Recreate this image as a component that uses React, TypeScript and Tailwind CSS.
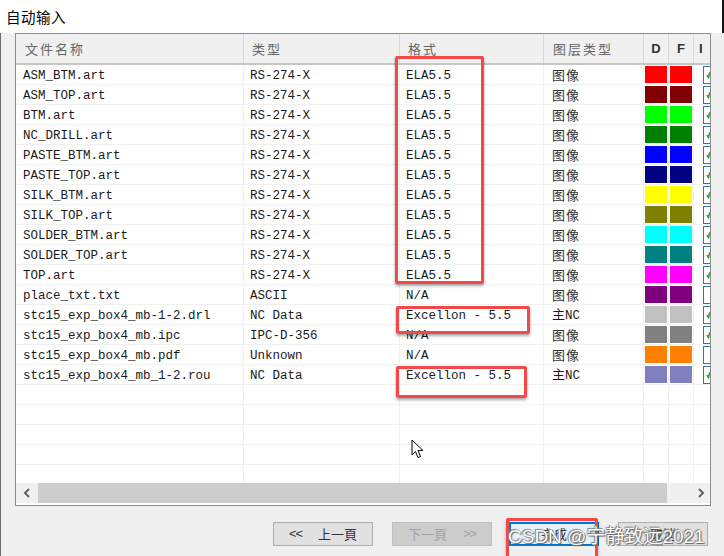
import React from "react";

type Row = [string, string, string, string, string, boolean]

const rows: Row[] = [
    ['ASM_BTM.art', 'RS-274-X', 'ELA5.5', '图像', '#ff0000', true],
    ['ASM_TOP.art', 'RS-274-X', 'ELA5.5', '图像', '#800000', true],
    ['BTM.art', 'RS-274-X', 'ELA5.5', '图像', '#00ff00', true],
    ['NC_DRILL.art', 'RS-274-X', 'ELA5.5', '图像', '#008000', true],
    ['PASTE_BTM.art', 'RS-274-X', 'ELA5.5', '图像', '#0000ff', true],
    ['PASTE_TOP.art', 'RS-274-X', 'ELA5.5', '图像', '#000080', true],
    ['SILK_BTM.art', 'RS-274-X', 'ELA5.5', '图像', '#ffff00', true],
    ['SILK_TOP.art', 'RS-274-X', 'ELA5.5', '图像', '#808000', true],
    ['SOLDER_BTM.art', 'RS-274-X', 'ELA5.5', '图像', '#00ffff', true],
    ['SOLDER_TOP.art', 'RS-274-X', 'ELA5.5', '图像', '#008080', true],
    ['TOP.art', 'RS-274-X', 'ELA5.5', '图像', '#ff00ff', true],
    ['place_txt.txt', 'ASCII', 'N/A', '图像', '#800080', false],
    ['stc15_exp_box4_mb-1-2.drl', 'NC Data', 'Excellon - 5.5', '主NC', '#c0c0c0', true],
    ['stc15_exp_box4_mb.ipc', 'IPC-D-356', 'N/A', '图像', '#808080', true],
    ['stc15_exp_box4_mb.pdf', 'Unknown', 'N/A', '图像', '#ff8000', false],
    ['stc15_exp_box4_mb_1-2.rou', 'NC Data', 'Excellon - 5.5', '主NC', '#8080c0', true],
]

const grid = "grid grid-cols-[228px_156px_144px_100px_25px_25px_40px]"
const mono = "font-['Liberation_Mono','Noto_Sans_CJK_SC',monospace] text-[12.5px] text-[#1a1a1a] pt-[4px]"
const cjk = "font-['Noto_Sans_CJK_SC',sans-serif]"

const Check = ({on}: { on: boolean }) => (
    <div className="ml-[9px] mt-[1px] h-[18px] w-[14px] border border-[#3d6fa6] bg-white">
        {on && (
            <svg width="6" height="8" viewBox="0 0 6 8" className="ml-[2px] mt-[4px]">
                <path d="M1 4 L2.5 6.5 L4 1" stroke="#3a9a3a" strokeWidth="1.6" fill="none"/>
            </svg>
        )}
    </div>
)

const Header = () => {
    const th = "flex items-center border-r border-[#d9d9d9] h-full"
    return (
        <div className={`${grid} h-[31px] bg-[#f0f0f0] border-b-2 border-[#c6c6c6] ${cjk} text-[13px] text-[#666] tracking-[2px]`}>
            <div className={`${th} pl-[9px]`}>文件名称</div>
            <div className={`${th} pl-[8px]`}>类型</div>
            <div className={`${th} pl-[8px]`}>格式</div>
            <div className={`${th} pl-[9px]`}>图层类型</div>
            <div className={`${th} justify-center font-['Liberation_Sans',sans-serif] font-bold text-[#333] tracking-normal`}>D</div>
            <div className={`${th} justify-center font-['Liberation_Sans',sans-serif] font-bold text-[#333] tracking-normal`}>F</div>
            <div className={`${th} pl-[5px] font-['Liberation_Sans',sans-serif] font-bold text-[#333] tracking-normal border-r-0`}>I</div>
        </div>
    )
}

const td = "h-[20px] border-r border-b border-[#f0f0f0] flex items-center whitespace-nowrap overflow-hidden"

const DataRow = ({r}: { r: Row }) => (
    <div className={grid}>
        <div className={`${td} pl-[7px] ${mono}`}>{r[0]}</div>
        <div className={`${td} pl-[6px] ${mono}`}>{r[1]}</div>
        <div className={`${td} pl-[6px] ${mono}`}>{r[2]}</div>
        <div className={`${td} pl-[8px] font-['Liberation_Mono',monospace] text-[12.5px] text-[#1a1a1a]`}>
            {r[3] === '主NC'
                ? <span><span className={`${cjk} text-[13px]`}>主</span>NC</span>
                : <span className={`${cjk} text-[13px] tracking-[1px] text-[#333]`}>{r[3]}</span>}
        </div>
        <div className={`${td} p-[1px]`}>
            <div className="w-full h-full" style={{background: r[4]}}/>
        </div>
        <div className={`${td} p-[1px]`}>
            <div className="w-full h-full" style={{background: r[4]}}/>
        </div>
        <div className={`${td} border-r-0`}><Check on={r[5]}/></div>
    </div>
)

const EmptyRow = () => (
    <div className={grid}>
        {[0, 1, 2, 3, 4, 5, 6].map(i => <div key={i} className={`${td} ${i == 6 ? 'border-r-0' : ''}`}/>)}
    </div>
)

const Chevron = ({dir}: { dir: 'l' | 'r' }) => (
    <svg width="8" height="10" viewBox="0 0 8 10">
        <path d={dir == 'l' ? "M6 1 L2 5 L6 9" : "M2 1 L6 5 L2 9"} stroke="#606060" strokeWidth="2" fill="none"/>
    </svg>
)

const Btn = ({children, className}: { children: React.ReactNode, className: string }) => (
    <div className={`h-[24px] flex items-center justify-center ${cjk} text-[13px] ${className}`}>{children}</div>
)

const RedBox = ({className}: { className: string }) => (
    <div className={`absolute border-[3px] border-[#f24848] rounded-[2px] shadow-[0_2px_3px_rgba(0,0,0,0.35)] ${className}`}/>
)

export default function App() {
    return (
        <div className="relative w-[724px] h-[556px] overflow-hidden bg-[#f0f0f0]">
            <div className="h-[33px] bg-white border-r-2 border-[#111] flex items-center pl-[6px]">
                <span className={`${cjk} text-[14.5px] text-black tracking-[0.5px]`}>自动输入</span>
            </div>
            <div className="border-l border-[#6a6a6a] h-[523px] flex flex-col">
                <div className="ml-[14px] w-[696px] h-[473px] border border-[#8c8c8c] bg-white flex flex-col overflow-hidden">
                    <Header/>
                    <div className="flex-1 overflow-hidden">
                        {rows.map(r => <DataRow key={r[0]} r={r}/>)}
                        {[0, 1, 2, 3, 4].map(i => <EmptyRow key={i}/>)}
                    </div>
                    <div className="h-[20px] flex bg-[#f0f0f0] mb-[2px]">
                        <div className="w-[22px] flex items-center justify-center"><Chevron dir="l"/></div>
                        <div className="w-[629px] bg-[#cdcdcd]"/>
                        <div className="flex-1 flex items-center justify-end pr-[5px]"><Chevron dir="r"/></div>
                    </div>
                </div>
                <div className="flex pl-[272px] pt-[16px]">
                    <Btn className="w-[100px] border border-[#adadad] bg-[#e1e1e1] text-[#333] gap-[16px]">
                        <span className="font-['Liberation_Sans',sans-serif] tracking-[-1px]">&lt;&lt;</span>
                        <span>上一頁</span>
                    </Btn>
                    <Btn className="ml-[19px] w-[100px] border border-[#bfbfbf] bg-[#cccccc] text-[#a3a3a3] gap-[16px]">
                        <span>下一頁</span>
                        <span className="font-['Liberation_Sans',sans-serif] tracking-[-1px]">&gt;&gt;</span>
                    </Btn>
                    <Btn className="ml-[17px] w-[90px] border-2 border-[#0078d7] bg-[#e5f1fb] text-[#333]">完成</Btn>
                    <Btn className="ml-[19px] w-[90px] border border-[#adadad] bg-[#e1e1e1] text-[#333]">取消</Btn>
                </div>
            </div>

            <RedBox className="left-[395px] top-[56px] w-[89px] h-[228px]"/>
            <RedBox className="left-[396px] top-[306px] w-[134px] h-[28px]"/>
            <RedBox className="left-[396px] top-[366px] w-[131px] h-[32px]"/>
            <RedBox className="left-[506px] top-[518px] w-[92px] h-[44px]"/>

            <svg className="absolute left-[411px] top-[439px]" width="14" height="21" viewBox="0 0 14 21">
                <path d="M1 1 L1 16 L4.5 12.5 L7 18.5 L9.5 17.5 L7 11.5 L12 11.5 Z" fill="white" stroke="black" strokeWidth="1"/>
            </svg>

            <div className={`absolute left-[508px] top-[525px] font-['Liberation_Sans','Noto_Sans_CJK_SC',sans-serif] text-[19px] leading-[24px] text-white whitespace-nowrap [text-shadow:0_0_1px_#555,1px_1px_1px_#666,-1px_-1px_1px_#888]`}>
                CSDN @宁静致远2021
            </div>
        </div>
    )
}
